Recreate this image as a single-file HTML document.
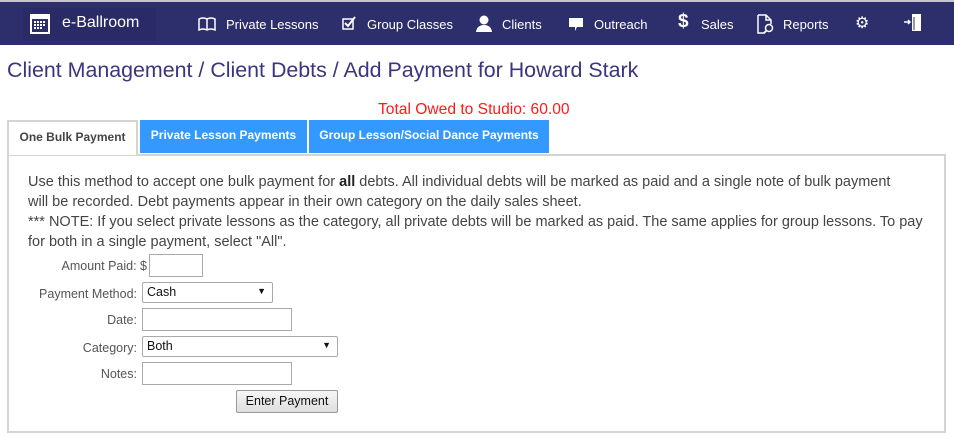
<!DOCTYPE html>
<html><head><meta charset="utf-8"><style>
*{box-sizing:border-box;margin:0;padding:0}
body{width:954px;height:447px;background:#fff;font-family:"Liberation Sans",sans-serif;position:relative;overflow:hidden;color:#333}
.top{position:absolute;left:0;top:0;width:954px;height:2px;background:#c8c8c8}
.nav{position:absolute;left:0;top:2px;width:954px;height:43px;background:#2d2e6c;color:#fff;font-size:13px}
.brand{position:absolute;left:23px;top:6px;width:133px;height:33px;background:#2a2b66}
.nav span{position:absolute;top:15px;white-space:nowrap}
.ic{position:absolute}
h1{position:absolute;left:7px;top:58px;font-size:21.4px;font-weight:normal;color:#3b3580;white-space:nowrap}
.owed{position:absolute;left:378px;top:101px;font-size:15.6px;color:#ff1a1a}
.tab{position:absolute;top:120px;height:33px;font-size:12px;font-weight:bold;text-align:center;line-height:30px;color:#fff;background:#3399ff}
.panel{position:absolute;left:7px;top:154px;width:939px;height:279px;border:2px solid #d4d4d4}
.txt{position:absolute;left:28px;top:172px;width:910px;font-size:14.5px;line-height:20px;color:#444;white-space:nowrap}
.lbl{position:absolute;font-size:12.5px;color:#555;text-align:right;width:130px;left:7px}
.in{position:absolute;border:1px solid #a9a9a9;background:#fff}
.sel{position:absolute;border:1px solid #a9a9a9;background:#fff;font-size:12.5px;color:#111;padding:2px 4px;border-radius:2px}
.sel i{position:absolute;right:6px;top:3px;font-style:normal;font-size:9px}
.btn{position:absolute;left:236px;top:390px;width:102px;height:23px;border:1px solid #999;border-radius:2px;background:linear-gradient(#f6f6f6,#dedede);font-size:12.5px;text-align:center;line-height:21px;color:#111}
</style></head><body>
<div class="top"></div>
<div class="nav">
<div class="brand"></div>
<svg class="ic" style="left:30px;top:12px" width="20" height="20" viewBox="0 0 20 20"><rect x="0" y="0" width="20" height="20" fill="#fff"/><rect x="2" y="5" width="16" height="13" fill="#2d2e6c"/><g fill="#fff"><rect x="4" y="7" width="2" height="2"/><rect x="7" y="7" width="2" height="2"/><rect x="10" y="7" width="2" height="2"/><rect x="13" y="7" width="2" height="2"/><rect x="4" y="10" width="2" height="2"/><rect x="7" y="10" width="2" height="2"/><rect x="10" y="10" width="2" height="2"/><rect x="13" y="10" width="2" height="2"/><rect x="4" y="13" width="2" height="2"/><rect x="7" y="13" width="2" height="2"/><rect x="10" y="13" width="2" height="2"/></g></svg>
<span style="left:62px;top:12px;font-size:16px">e-Ballroom</span>
<svg class="ic" style="left:198px;top:15px" width="18" height="14" viewBox="0 0 18 14"><path d="M1 2 Q5 0 9 2 Q13 0 17 2 V13 Q13 11 9 13 Q5 11 1 13Z M9 2V13" fill="none" stroke="#fff" stroke-width="1.5"/></svg>
<span style="left:226px">Private Lessons</span>
<svg class="ic" style="left:342px;top:14px" width="14" height="14" viewBox="0 0 14 14"><rect x="1" y="3" width="10" height="10" fill="none" stroke="#fff" stroke-width="1.5"/><path d="M3 7 L6 10 L13 1" fill="none" stroke="#fff" stroke-width="2"/></svg>
<span style="left:367px">Group Classes</span>
<svg class="ic" style="left:476px;top:13px" width="16" height="17" viewBox="0 0 16 17"><circle cx="8" cy="5" r="4.5" fill="#fff"/><path d="M0 17 Q1 10 8 10 Q15 10 16 17Z" fill="#fff"/></svg>
<span style="left:502px">Clients</span>
<svg class="ic" style="left:569px;top:16px" width="14" height="13" viewBox="0 0 14 13"><path d="M0 0H14V9H8L6 13V9H0Z" fill="#fff"/></svg>
<span style="left:594px">Outreach</span>
<span style="left:678px;top:9px;font-size:19px;font-weight:bold">$</span>
<span style="left:701px">Sales</span>
<svg class="ic" style="left:757px;top:12px" width="18" height="20" viewBox="0 0 18 20"><path d="M1 1H9L14 6V10M8 19H1V1M9 1V6H14" fill="none" stroke="#fff" stroke-width="1.5"/><circle cx="12" cy="14" r="3.5" fill="none" stroke="#fff" stroke-width="1.5"/><path d="M9.5 16.5L7 19" stroke="#fff" stroke-width="1.8"/></svg>
<span style="left:783px">Reports</span>
<span style="left:855px;top:11px;font-size:16px">⚙</span>
<svg class="ic" style="left:904px;top:12px" width="18" height="18" viewBox="0 0 18 18"><rect x="8" y="0" width="9" height="17" fill="#fff"/><path d="M10 3V16" stroke="#2d2e6c" stroke-width="1"/><path d="M0 8H6M4 6L6 8L4 10" stroke="#fff" stroke-width="1.5" fill="none"/></svg>
</div>
<h1>Client Management / Client Debts / Add Payment for Howard Stark</h1>
<div class="owed">Total Owed to Studio: 60.00</div>
<div class="tab" style="left:7px;width:131px;background:#fff;color:#444;border:2px solid #d4d4d4;border-bottom:none;height:35px;z-index:2">One Bulk Payment</div>
<div class="tab" style="left:140px;width:167px">Private Lesson Payments</div>
<div class="tab" style="left:309px;width:240px">Group Lesson/Social Dance Payments</div>
<div class="panel"></div>
<div class="txt">Use this method to accept one bulk payment for <b style="color:#222">all</b> debts. All individual debts will be marked as paid and a single note of bulk payment<br>will be recorded. Debt payments appear in their own category on the daily sales sheet.<br>*** NOTE: If you select private lessons as the category, all private debts will be marked as paid. The same applies for group lessons. To pay<br>for both in a single payment, select "All".</div>
<div class="lbl" style="top:259px;width:140px">Amount Paid: $</div>
<div class="in" style="left:149px;top:254px;width:54px;height:23px"></div>
<div class="lbl" style="top:287px">Payment Method:</div>
<div class="sel" style="left:142px;top:282px;width:131px;height:21px">Cash<i>▼</i></div>
<div class="lbl" style="top:313px">Date:</div>
<div class="in" style="left:142px;top:308px;width:150px;height:23px"></div>
<div class="lbl" style="top:341px">Category:</div>
<div class="sel" style="left:142px;top:336px;width:196px;height:21px">Both<i>▼</i></div>
<div class="lbl" style="top:367px">Notes:</div>
<div class="in" style="left:142px;top:362px;width:150px;height:23px"></div>
<div class="btn">Enter Payment</div>
</body></html>
